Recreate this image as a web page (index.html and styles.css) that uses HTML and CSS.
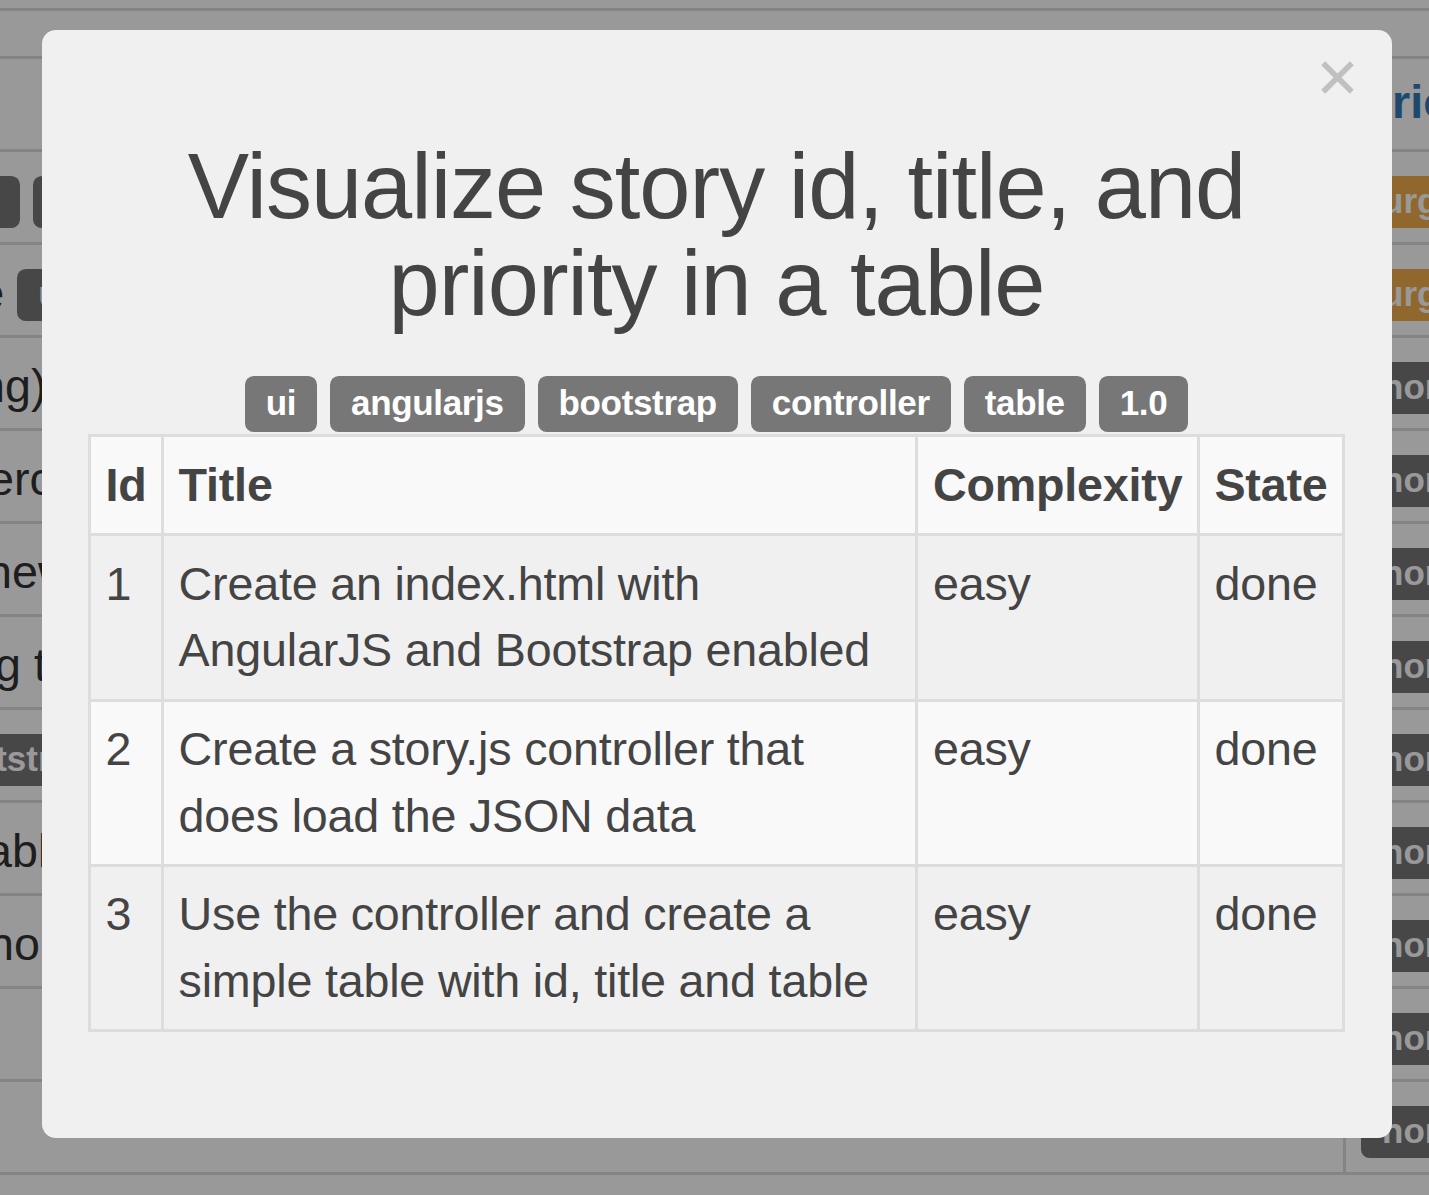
FILE: index.html
```html
<!DOCTYPE html>
<html lang="en">
<head>
<meta charset="utf-8">
<title>Stories</title>
<link rel="stylesheet" href="styles.css">
</head>
<body>
<div class="page">
  <div class="page-top"></div>
  <div class="page-head"></div>
  <div class="prow prow-head">
    <div class="pleft"></div>
    <div class="pright"><span class="plink">Priority</span></div>
  </div>
  <div class="prow">
    <div class="pleft"><span class="plabel shift-labels">angularjs</span> <span class="plabel">ui</span></div>
    <div class="pright"><span class="plabel warn">urgent</span></div>
  </div>
  <div class="prow">
    <div class="pleft"><span class="shift-table">table</span> <span class="plabel">ui</span></div>
    <div class="pright"><span class="plabel warn">urgent</span></div>
  </div>
  <div class="prow">
    <div class="pleft"><span class="shift-ng">ng)</span></div>
    <div class="pright"><span class="plabel">normal</span></div>
  </div>
  <div class="prow">
    <div class="pleft"><span class="shift-s">erce</span></div>
    <div class="pright"><span class="plabel">normal</span></div>
  </div>
  <div class="prow">
    <div class="pleft"><span class="shift-n">new</span></div>
    <div class="pright"><span class="plabel">normal</span></div>
  </div>
  <div class="prow">
    <div class="pleft"><span class="shift-xs">g t</span></div>
    <div class="pright"><span class="plabel">normal</span></div>
  </div>
  <div class="prow">
    <div class="pleft"><span class="plabel shift-boot">bootstrap</span></div>
    <div class="pright"><span class="plabel">normal</span></div>
  </div>
  <div class="prow">
    <div class="pleft"><span class="shift-a">able</span></div>
    <div class="pright"><span class="plabel">normal</span></div>
  </div>
  <div class="prow">
    <div class="pleft"><span class="shift-s">nor</span></div>
    <div class="pright"><span class="plabel">normal</span></div>
  </div>
  <div class="prow">
    <div class="pleft"></div>
    <div class="pright"><span class="plabel">normal</span></div>
  </div>
  <div class="prow">
    <div class="pleft"></div>
    <div class="pright"><span class="plabel">normal</span></div>
  </div>
  <div class="page-end"></div>
</div>

<div class="backdrop">
  <div class="modal">
    <button class="close" type="button" aria-label="Close">
      <svg viewBox="0 0 33 33" width="33" height="33" aria-hidden="true">
        <line x1="2.2" y1="2.2" x2="30.8" y2="30.8"/>
        <line x1="30.8" y1="2.2" x2="2.2" y2="30.8"/>
      </svg>
    </button>
    <h1 class="modal-title">Visualize story id, title, and priority in a table</h1>
    <div class="tags">
      <span class="tag">ui</span>
      <span class="tag">angularjs</span>
      <span class="tag">bootstrap</span>
      <span class="tag">controller</span>
      <span class="tag">table</span>
      <span class="tag">1.0</span>
    </div>
    <table class="stories">
      <thead>
        <tr><th>Id</th><th>Title</th><th>Complexity</th><th>State</th></tr>
      </thead>
      <tbody>
        <tr><td>1</td><td>Create an index.html with AngularJS and Bootstrap enabled</td><td>easy</td><td>done</td></tr>
        <tr><td>2</td><td>Create a story.js controller that does load the JSON data</td><td>easy</td><td>done</td></tr>
        <tr><td>3</td><td>Use the controller and create a simple table with id, title and table</td><td>easy</td><td>done</td></tr>
      </tbody>
    </table>
  </div>
</div>
</body>
</html>
```

FILE: styles.css
```css
html, body {
  margin: 0;
  padding: 0;
}
body {
  font-family: "Liberation Sans", Arial, Helvetica, sans-serif;
  background: #fff;
  color: #333;
  overflow: hidden;
  width: 1429px;
  height: 1195px;
}

/* ---------- background page ---------- */
.page {
  width: 1700px;
}
.page-top {
  height: 8px;
}
.page-head {
  border-top: 3px solid #ddd;
  height: 45px;
}
.prow {
  display: flex;
  border-top: 3px solid #ddd;
  height: 90px;
  font-size: 46.67px;
  line-height: 66.67px;
}
.pleft {
  flex: 1 1 auto;
  padding: 14.5px 0;
  white-space: nowrap;
  overflow: hidden;
}
.pright {
  flex: 0 0 324px;
  border-left: 3px solid #ddd;
  padding: 14.5px 15px;
  white-space: nowrap;
}
.prow-head .pright {
  padding-top: 10px;
}
.plink {
  color: #337ab7;
  font-weight: bold;
}
.plabel {
  display: inline-block;
  font-size: 35px;
  font-weight: bold;
  line-height: 35px;
  padding: 7px 21px 10.5px;
  border-radius: 8.75px;
  background: #777;
  color: #fff;
  vertical-align: 3px;
}
.plabel.warn {
  background: #f0ad4e;
}
.shift-labels { margin-left: -178px; }
.shift-table { margin-left: -97px; }
.shift-ng { margin-left: -21px; }
.shift-s { margin-left: -12px; }
.shift-n { margin-left: -14px; }
.shift-xs { margin-left: -5px; }
.shift-a { margin-left: -14px; }
.shift-boot { margin-left: -90px; }
.page-end {
  border-top: 3px solid #ddd;
}

/* ---------- modal ---------- */
.backdrop {
  position: fixed;
  inset: 0;
  background: rgba(0, 0, 0, 0.4);
  padding: 30px 0 0 42px;
}
.modal {
  position: relative;
  box-sizing: border-box;
  width: 1350px;
  background: #f0f0f0;
  border-radius: 14px;
  padding: 107.6px 47px 106px 46px;
  color: #444;
}
.close {
  position: absolute;
  top: 31px;
  right: 38px;
  width: 33px;
  height: 33px;
  padding: 0;
  border: 0;
  background: transparent;
}
.close svg {
  display: block;
}
.close line {
  stroke: #c0c0c0;
  stroke-width: 5.6;
}
.modal-title {
  margin: 0;
  font-size: 92px;
  letter-spacing: -1px;
  line-height: 97px;
  font-weight: normal;
  text-align: center;
}
.tags {
  display: flex;
  justify-content: center;
  gap: 13px;
  margin-top: 44.4px;
  margin-bottom: 2px;
}
.tag {
  font-size: 35px;
  font-weight: bold;
  letter-spacing: -0.35px;
  line-height: 39px;
  padding: 7px 21px 10.5px;
  border-radius: 8.75px;
  background: #777;
  color: #fff;
}
.stories {
  width: 100%;
  border-collapse: separate;
  border-spacing: 0;
  border-top: 3px solid #ddd;
  border-left: 3px solid #ddd;
  font-size: 46.67px;
  line-height: 66.67px;
  letter-spacing: -0.2px;
}
.stories th,
.stories td {
  border-right: 3px solid #ddd;
  border-bottom: 3px solid #ddd;
  padding: 14.5px;
  text-align: left;
  vertical-align: top;
}
.stories th {
  font-weight: bold;
  background: #f9f9f9;
}
.stories tbody tr:nth-child(even) td {
  background: #f9f9f9;
}
```
